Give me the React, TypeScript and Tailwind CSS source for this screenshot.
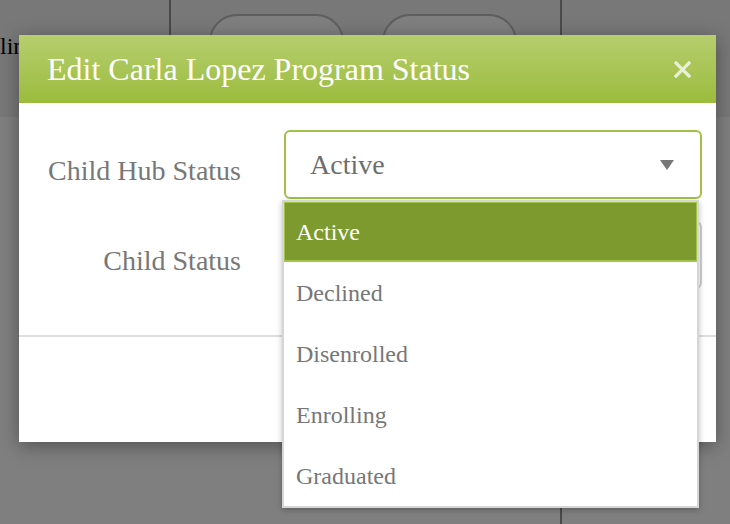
import React from 'react';

const serif = { fontFamily: '"Liberation Serif", "Times New Roman", serif' };

const options = ['Active', 'Declined', 'Disenrolled', 'Enrolling', 'Graduated'];

function PageBehind() {
  return (
    <div className="flex h-full w-full flex-col bg-[#7f7f7f]" style={serif}>
      <div className="flex h-[117px] bg-[#787878]">
        <div className="w-[171px] border-r-2 border-[#4a4a4a] pt-[34px] text-[24px] leading-none text-black">lin</div>
        <div className="flex w-[391px] gap-[38px] border-r-2 border-[#4a4a4a] pl-[38px] pt-[14px]">
          <div className="h-[60px] w-[135px] rounded-[28px] border-2 border-[#5e5e5e] bg-[#7f7f7f]" />
          <div className="h-[60px] w-[135px] rounded-[28px] border-2 border-[#5e5e5e] bg-[#7f7f7f]" />
        </div>
        <div className="flex-1" />
      </div>
      <div className="flex flex-1">
        <div className="w-[562px] border-r-2 border-[#4a4a4a]" />
        <div className="flex-1" />
      </div>
    </div>
  );
}

function Triangle() {
  return (
    <svg width="14" height="10" viewBox="0 0 14 10">
      <path d="M0 0 L14 0 L7 10 Z" fill="#777" />
    </svg>
  );
}

export default function App() {
  return (
    <div className="relative h-[524px] w-[730px] overflow-hidden" style={serif}>
      <PageBehind />

      <div className="absolute left-[19px] top-[35px] w-[697px] bg-white shadow-[0_4px_18px_rgba(0,0,0,0.35)]">
        <div className="flex h-[68px] items-center justify-between bg-gradient-to-b from-[#b6ce6e] to-[#9bbc3b] pl-[28px] pr-[25px]">
          <span className="text-[32px] leading-none text-white">Edit Carla Lopez Program Status</span>
          <svg width="17" height="17" viewBox="0 0 17 17">
            <path d="M2 2 L15 15 M15 2 L2 15" stroke="#e9efd9" strokeWidth="3.2" strokeLinecap="square" />
          </svg>
        </div>

        <div className="flex flex-col gap-[22px] pb-[46px] pt-[27px]">
          <div className="flex items-center">
            <div className="w-[222px] pt-[13px] text-right text-[28px] leading-none text-[#777]">Child Hub Status</div>
            <div className="relative ml-[43px] w-[418px]">
              <div className="flex h-[69px] items-center justify-between rounded-[6px] border-2 border-[#a0c143] pl-[24px] pr-[26px]">
                <span className="text-[28px] leading-none text-[#6e6e6e]">Active</span>
                <Triangle />
              </div>
              <div className="absolute left-[-2px] top-[70px] z-10 w-[417px] border-2 border-[#d6d6d6] bg-white shadow-[0_2px_6px_rgba(0,0,0,0.25)]">
                {options.map((o, i) => (
                  <div
                    key={o}
                    className={
                      i === 0
                        ? 'flex h-[60px] items-center border border-b-2 border-[#a3c44b] bg-[#7c9a2e] px-[11px] text-[24px] text-white'
                        : 'flex h-[61px] items-center px-[12px] text-[24px] text-[#777]'
                    }
                  >
                    {o}
                  </div>
                ))}
              </div>
            </div>
          </div>

          <div className="flex items-center">
            <div className="w-[222px] pt-[11px] text-right text-[28px] leading-none text-[#777]">Child Status</div>
            <div className="ml-[43px] h-[68px] w-[418px] rounded-[6px] border-2 border-[#cfcfcf]" />
          </div>
        </div>

        <div className="h-[2px] bg-[#dedede]" />
        <div className="h-[105px]" />
      </div>
    </div>
  );
}
